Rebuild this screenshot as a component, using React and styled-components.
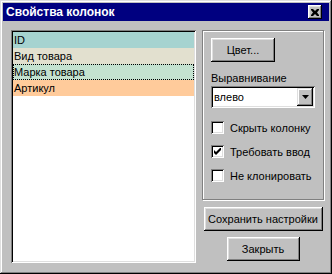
import React from "react";
import styled, { createGlobalStyle } from "styled-components";

const GlobalStyle = createGlobalStyle`
    html, body {
        margin: 0;
        padding: 0;
        background: #c0c0c0;
    }
    * {
        box-sizing: border-box;
    }
`;

const Window = styled.div`
    width: 332px;
    height: 274px;
    background: #c0c0c0;
    padding: 3px;
    display: flex;
    flex-direction: column;
    font-family: "Liberation Sans", Arial, sans-serif;
    font-size: 11px;
    color: #000;
    box-shadow: inset -1px -1px #000, inset 1px 1px #dfdfdf, inset -2px -2px #808080, inset 2px 2px #fff;
`;

const TitleBar = styled.div`
    height: 18px;
    background: #000080;
    display: flex;
    align-items: center;
    justify-content: space-between;
    padding: 0 7px 0 3px;
`;

const TitleText = styled.span`
    color: #fff;
    font-weight: bold;
    font-size: 12px;
`;

const CloseButton = styled.div`
    width: 14px;
    height: 14px;
    background: #c0c0c0;
    display: flex;
    align-items: center;
    justify-content: center;
    box-shadow: inset -1px -1px #000, inset 1px 1px #fff, inset -2px -2px #808080, inset 2px 2px #dfdfdf;
`;

const Body = styled.div`
    display: flex;
    gap: 6px;
    padding: 9px 0 0 8px;
`;

const ListBox = styled.div`
    width: 185px;
    height: 233px;
    background: #fff;
    padding: 2px;
    box-shadow: inset 1px 1px #808080, inset -1px -1px #fff, inset 2px 2px #000, inset -2px -2px #dfdfdf;
`;

const ListRow = styled.div`
    height: 16px;
    line-height: 16px;
    padding-left: 1px;
    background: ${props => props.color};
    outline: ${props => props.focused ? "1px dotted #000" : "none"};
    outline-offset: -1px;
    white-space: nowrap;
`;

const RightColumn = styled.div`
    width: 122px;
    display: flex;
    flex-direction: column;
    align-items: center;
`;

const GroupBox = styled.div`
    width: 122px;
    height: 170px;
    border: 1px solid #808080;
    box-shadow: inset 1px 1px #fff, 1px 1px #fff;
    padding: 7px 0 0 8px;
    display: flex;
    flex-direction: column;
    align-items: flex-start;
`;

const Button = styled.div`
    width: ${props => props.w}px;
    height: 24px;
    margin-top: ${props => props.mt || 0}px;
    display: flex;
    align-items: center;
    justify-content: center;
    background: #c0c0c0;
    white-space: nowrap;
    box-shadow: inset -1px -1px #000, inset 1px 1px #fff, inset -2px -2px #808080, inset 2px 2px #dfdfdf;
`;

const FieldLabel = styled.div`
    height: 14px;
    line-height: 14px;
    margin: 9px 0 1px 0;
`;

const Select = styled.div`
    width: 104px;
    height: 22px;
    background: #fff;
    padding: 2px;
    display: flex;
    align-items: center;
    box-shadow: inset 1px 1px #808080, inset -1px -1px #fff, inset 2px 2px #000, inset -2px -2px #dfdfdf;
`;

const SelectValue = styled.span`
    flex: 1;
    padding-left: 1px;
`;

const DropButton = styled.div`
    width: 16px;
    height: 18px;
    background: #c0c0c0;
    display: flex;
    align-items: center;
    justify-content: center;
    box-shadow: inset -1px -1px #000, inset 1px 1px #dfdfdf, inset -2px -2px #808080, inset 2px 2px #fff;
`;

const CheckList = styled.div`
    display: flex;
    flex-direction: column;
    gap: 11px;
    margin-top: 13px;
`;

const CheckRow = styled.label`
    display: flex;
    align-items: center;
    gap: 6px;
    height: 13px;
`;

const CheckBox = styled.span`
    width: 13px;
    height: 13px;
    background: #fff;
    display: flex;
    align-items: center;
    justify-content: center;
    box-shadow: inset 1px 1px #808080, inset -1px -1px #fff, inset 2px 2px #000, inset -2px -2px #dfdfdf;
`;

const rows = [
    { label: "ID", color: "#a6d3d0" },
    { label: "Вид товара", color: "#e2e0cf" },
    { label: "Марка товара", color: "#c4e2d0", focused: true },
    { label: "Артикул", color: "#ffcb9b" },
];

const checks = [
    { label: "Скрыть колонку", checked: false },
    { label: "Требовать ввод", checked: true },
    { label: "Не клонировать", checked: false },
];

export default function App() {
    return (
        <>
            <GlobalStyle />
            <Window>
                <TitleBar>
                    <TitleText>Свойства колонок</TitleText>
                    <CloseButton>
                        <svg width="8" height="7" viewBox="0 0 8 7">
                            <path d="M0 0h2l2 2 2-2h2v1l-2 2.5 2 2.5v1h-2l-2-2-2 2h-2v-1l2-2.5-2-2.5z" fill="#000" />
                        </svg>
                    </CloseButton>
                </TitleBar>
                <Body>
                    <ListBox>
                        {rows.map(r => (
                            <ListRow key={r.label} color={r.color} focused={r.focused}>{r.label}</ListRow>
                        ))}
                    </ListBox>
                    <RightColumn>
                        <GroupBox>
                            <Button w={64}>Цвет...</Button>
                            <FieldLabel>Выравнивание</FieldLabel>
                            <Select>
                                <SelectValue>влево</SelectValue>
                                <DropButton>
                                    <svg width="7" height="4" viewBox="0 0 7 4">
                                        <path d="M0 0h7l-3.5 4z" fill="#000" />
                                    </svg>
                                </DropButton>
                            </Select>
                            <CheckList>
                                {checks.map(c => (
                                    <CheckRow key={c.label}>
                                        <CheckBox>
                                            {c.checked ? (
                                                <svg width="7" height="7" viewBox="0 0 7 7">
                                                    <path d="M0 2v3l2 2 5-5v-3l-5 5z" fill="#000" />
                                                </svg>
                                            ) : null}
                                        </CheckBox>
                                        <span>{c.label}</span>
                                    </CheckRow>
                                ))}
                            </CheckList>
                        </GroupBox>
                        <Button w={119} mt={7}>Сохранить настройки</Button>
                        <Button w={73} mt={6}>Закрыть</Button>
                    </RightColumn>
                </Body>
            </Window>
        </>
    );
}
